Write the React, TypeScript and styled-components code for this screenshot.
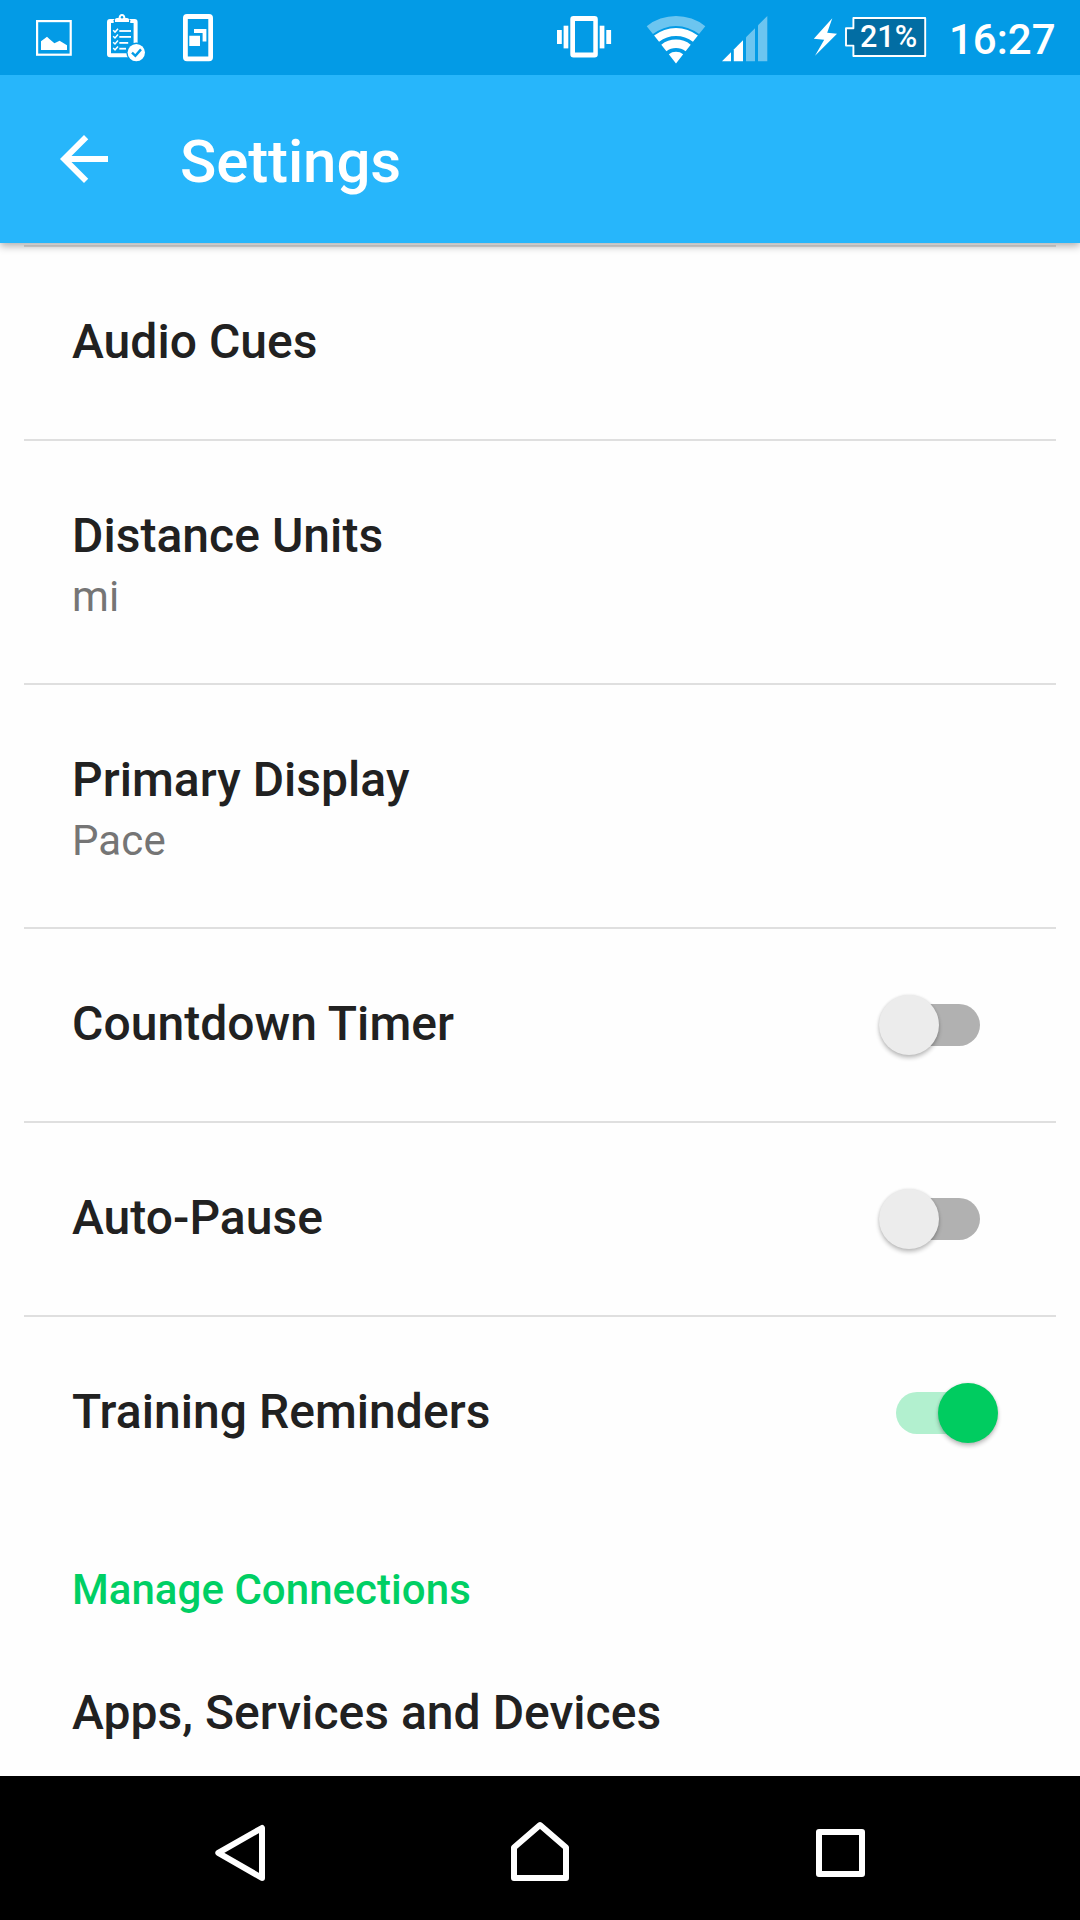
import React, { useState } from "react";
import styled, { createGlobalStyle } from "styled-components";

const GlobalStyle = createGlobalStyle`
  *, *::before, *::after { box-sizing: border-box; }
  body {
    margin: 0;
    background: #ffffff;
    font-family: Roboto, "Noto Sans", sans-serif;
  }
`;

const Screen = styled.div`
  display: flex;
  flex-direction: column;
  width: 1080px;
  height: 1920px;
  overflow: hidden;
  background: #fefefe;
`;

const StatusBar = styled.header`
  display: flex;
  justify-content: space-between;
  flex: none;
  z-index: 2;
  height: 75px;
  padding: 0 25px 0 36px;
  background: #039be6;
  color: #ffffff;
`;

const StatusGroup = styled.div`
  display: flex;
  align-items: flex-start;
`;

const Glyph = styled.svg<{ $before?: number }>`
  display: block;
  flex: none;
  height: 75px;
  margin-left: ${(p) => p.$before ?? 0}px;
`;

const Battery = styled.div`
  display: grid;
  width: 84px;
  height: 75px;
  margin-left: 6px;
  > * {
    grid-area: 1 / 1;
  }
`;

const BatteryLevel = styled.span`
  z-index: 1;
  padding: 19px 0 0 16px;
  font-size: 30.5px;
  font-weight: 500;
  line-height: 36px;
  white-space: nowrap;
`;

const Clock = styled.time`
  width: 106px;
  margin-left: 21px;
  padding-top: 15px;
  font-size: 42px;
  font-weight: 500;
  line-height: 49px;
  white-space: nowrap;
`;

const AppBar = styled.div`
  display: flex;
  align-items: center;
  flex: none;
  z-index: 1;
  height: 168px;
  padding: 0 48px;
  gap: 60px;
  background: #27b6fb;
  color: #ffffff;
  box-shadow: 0 3px 8px rgba(0, 0, 0, 0.32);
`;

const BackButton = styled.button`
  display: block;
  padding: 0;
  border: 0;
  background: none;
  color: inherit;
  svg {
    display: block;
  }
`;

const Title = styled.h1`
  margin: 6px 0 0;
  font-size: 60px;
  font-weight: 500;
  line-height: 70px;
  letter-spacing: -0.12px;
`;

const Content = styled.main`
  flex: 1;
  min-height: 0;
  padding: 2px 24px 0;
  overflow: hidden;
`;

const Row = styled.section`
  display: flex;
  align-items: center;
  justify-content: space-between;
  border-top: 2px solid #dfdfdf;
  padding: 0 76px 0 48px;
`;

const RowText = styled.div<{ $twoLine: boolean }>`
  padding: 67px 0 ${(p) => (p.$twoLine ? 61 : 69)}px;
`;

const Label = styled.div`
  color: #212121;
  font-size: 48px;
  font-weight: 500;
  line-height: 56px;
  letter-spacing: 0.04px;
  white-space: nowrap;
`;

const Value = styled.div`
  margin-top: 8px;
  color: #757575;
  font-size: 42px;
  line-height: 50px;
  letter-spacing: 0.1px;
`;

const Track = styled.button<{ $on: boolean }>`
  position: relative;
  flex: none;
  width: 84px;
  height: 42px;
  padding: 0;
  border: 0;
  border-radius: 21px;
  background: ${(p) => (p.$on ? "#b2f0cf" : "#b1b1b1")};
`;

const Thumb = styled.span<{ $on: boolean }>`
  position: absolute;
  top: -9.5px;
  left: ${(p) => (p.$on ? "41.5px" : "-17.5px")};
  width: 60px;
  height: 60px;
  border-radius: 50%;
  background: ${(p) => (p.$on ? "#00cc60" : "#ececec")};
  box-shadow: 0 3px 4px rgba(0, 0, 0, 0.24), 0 0 3px rgba(0, 0, 0, 0.1);
`;

const SectionHeading = styled.h2`
  margin: 56px 48px 0;
  color: #00cf64;
  font-size: 42px;
  font-weight: 500;
  line-height: 50px;
  letter-spacing: 0.04px;
`;

const SectionItem = styled.div`
  padding: 70px 48px 0;
`;

const NavBar = styled.nav`
  display: flex;
  justify-content: space-between;
  flex: none;
  height: 144px;
  padding: 0 210px;
  background: #000000;
`;

const NavIcon = styled.svg`
  display: block;
  width: 60px;
  height: 144px;
  fill: none;
  stroke: #ffffff;
  stroke-width: 6;
  stroke-linejoin: round;
`;

function PictureIcon() {
  return (
    <Glyph width={36} viewBox="36 0 36 75">
      <rect x="37.1" y="21.1" width="33.6" height="33.6" fill="none" stroke="#fff" strokeWidth="2.2" />
      <path d="M41 50V41.2L47 36.8 49.4 39 54.4 43.2 59.6 40.8 67 45.2V50Z" fill="#fff" />
    </Glyph>
  );
}

function ClipboardIcon() {
  return (
    <Glyph width={40} viewBox="107 0 40 75" $before={35}>
      <rect x="109" y="21" width="26.6" height="34.3" rx="1" fill="none" stroke="#fff" strokeWidth="4" />
      <path
        d="M113.7 23.6V20.3L116.5 17H127.3L130.2 20.3V23.6Z"
        fill="#039be6"
      />
      <path d="M115 22V19.6Q115 18 117 18H118.5Q119 14 122 14T125.4 18H127Q129 18 129 19.6V22Z" fill="#fff" />
      <circle cx="122" cy="17.3" r="1.2" fill="#039be6" />
      {[30.3, 36.2, 42.2, 48].map((y, i) => (
        <g key={y} fill="none" stroke="#fff">
          <path d={`M113.2 ${y}l1.8 1.8 3-3.4`} strokeWidth="1.5" />
          <path d={`M119.3 ${y + 0.7}H${[131, 131, 128.2, 126][i]}`} strokeWidth="1.8" />
        </g>
      ))}
      <circle cx="136.3" cy="52.6" r="10" fill="#039be6" />
      <circle cx="136.3" cy="52.6" r="8.7" fill="#fff" />
      <path d="M132 52.6l3.4 3.2 5.6-6.4" fill="none" stroke="#039be6" strokeWidth="2.4" />
    </Glyph>
  );
}

function PhoneIcon() {
  return (
    <Glyph width={32} viewBox="182 0 32 75" $before={35}>
      <path
        d="M187 14H209Q213 14 213 18V57.3Q213 61.3 209 61.3H187Q183 61.3 183 57.3V18Q183 14 187 14ZM187.8 19V56.6H208.3V19Z"
        fill="#fff"
        fillRule="evenodd"
      />
      <path d="M189.3 35.8H200V46H189.3ZM194 29H206.4V41.6H202.6V33H194Z" fill="#fff" />
    </Glyph>
  );
}

function VibrateIcon() {
  return (
    <Glyph width={56} viewBox="556 0 56 75" fill="#fff">
      <path
        d="M573.5 16H594.6Q597.8 16 597.8 19.2V54.2Q597.8 57.4 594.6 57.4H573.5Q570.3 57.4 570.3 54.2V19.2Q570.3 16 573.5 16ZM575 21V52.4H593.3V21Z"
        fillRule="evenodd"
      />
      <rect x="557" y="30" width="4.8" height="14" />
      <rect x="563.6" y="25.7" width="4.7" height="22.7" />
      <rect x="599.7" y="25.7" width="4.7" height="22.7" />
      <rect x="606.3" y="30" width="4.8" height="14" />
    </Glyph>
  );
}

const APEX = { x: 676, y: 63.4 };
const SPREAD = (38.2 * Math.PI) / 180;

function wifiBand(outer: number, inner: number) {
  const sx = Math.sin(SPREAD);
  const cy = Math.cos(SPREAD);
  const at = (r: number, side: number) => `${APEX.x + side * r * sx} ${APEX.y - r * cy}`;
  return `M${at(outer, -1)}A${outer} ${outer} 0 0 1 ${at(outer, 1)}L${at(inner, 1)}A${inner} ${inner} 0 0 0 ${at(inner, -1)}Z`;
}

function WifiIcon() {
  return (
    <Glyph width={60} viewBox="646 0 60 75" $before={34} fill="#fff">
      <path d={wifiBand(47.4, 37.3)} opacity="0.42" />
      <path d={wifiBand(35.4, 27.4)} />
      <path d={wifiBand(23.8, 15.5)} />
      <path d={wifiBand(11.6, 0.01)} />
    </Glyph>
  );
}

function SignalIcon() {
  return (
    <Glyph width={48} viewBox="721 0 48 75" $before={15} fill="#fff">
      <path d="M722 61.2L731 52.2V61.2Z" />
      <path d="M733.8 61.2V49.4L743 40.2V61.2Z" />
      <path d="M746 61.2V37.2L755 28.2V61.2Z" opacity="0.42" />
      <path d="M758 61.2V25.2L767.3 16V61.2Z" opacity="0.42" />
    </Glyph>
  );
}

function BoltIcon() {
  return (
    <Glyph width={25} viewBox="813 0 25 75" $before={44}>
      <path d="M832.3 18.3L813.8 38.8 824.2 39.8 815 55.8 837 33.8 827.2 32.8Z" fill="#fff" />
    </Glyph>
  );
}

function BatteryIcon() {
  return (
    <Glyph width={84} viewBox="844 0 84 75">
      <path
        d="M853.4 18H925.2V56H853.4V45.6H846V28.2H853.4Z"
        fill="#026da3"
        stroke="#fff"
        strokeWidth="1.9"
        strokeLinejoin="round"
      />
    </Glyph>
  );
}

function Toggle({ initial }: { initial: boolean }) {
  const [on, setOn] = useState(initial);
  return (
    <Track $on={on} role="switch" aria-checked={on} onClick={() => setOn(!on)}>
      <Thumb $on={on} />
    </Track>
  );
}

type Setting = { label: string; value?: string; toggle?: boolean };

const settings: Setting[] = [
  { label: "Audio Cues" },
  { label: "Distance Units", value: "mi" },
  { label: "Primary Display", value: "Pace" },
  { label: "Countdown Timer", toggle: false },
  { label: "Auto-Pause", toggle: false },
  { label: "Training Reminders", toggle: true },
];

export default function App() {
  return (
    <>
      <GlobalStyle />
      <Screen>
        <StatusBar>
          <StatusGroup>
            <PictureIcon />
            <ClipboardIcon />
            <PhoneIcon />
          </StatusGroup>
          <StatusGroup>
            <VibrateIcon />
            <WifiIcon />
            <SignalIcon />
            <BoltIcon />
            <Battery>
              <BatteryIcon />
              <BatteryLevel>21%</BatteryLevel>
            </Battery>
            <Clock>16:27</Clock>
          </StatusGroup>
        </StatusBar>
        <AppBar>
          <BackButton aria-label="Back">
            <svg width="72" height="72" viewBox="0 0 24 24" fill="currentColor">
              <path d="M20 11H7.83l5.59-5.59L12 4l-8 8 8 8 1.41-1.41L7.83 13H20v-2z" />
            </svg>
          </BackButton>
          <Title>Settings</Title>
        </AppBar>
        <Content>
          {settings.map(({ label, value, toggle }) => (
            <Row key={label}>
              <RowText $twoLine={value !== undefined}>
                <Label>{label}</Label>
                {value && <Value>{value}</Value>}
              </RowText>
              {toggle !== undefined && <Toggle initial={toggle} />}
            </Row>
          ))}
          <SectionHeading>Manage Connections</SectionHeading>
          <SectionItem>
            <Label>Apps, Services and Devices</Label>
          </SectionItem>
        </Content>
        <NavBar>
          <NavIcon viewBox="210 1776 60 144">
            <path d="M218.3 1852.8L262 1828V1878Z" />
          </NavIcon>
          <NavIcon viewBox="510 1776 60 144">
            <path d="M514 1847.5L540 1825 566 1847.5V1878H514Z" />
          </NavIcon>
          <NavIcon viewBox="810 1776 60 144">
            <path d="M819 1832H862V1874H819Z" />
          </NavIcon>
        </NavBar>
      </Screen>
    </>
  );
}
